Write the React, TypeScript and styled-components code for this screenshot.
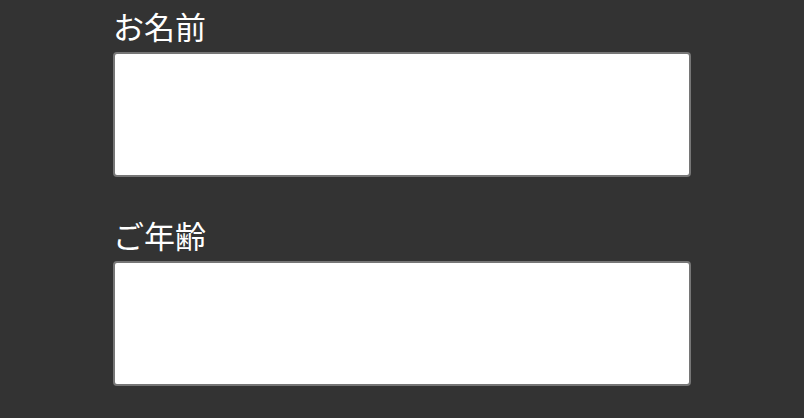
import React from "react";
import styled, { createGlobalStyle } from "styled-components";

const GlobalStyle = createGlobalStyle`
    html, body {
        margin: 0;
        padding: 0;
        background-color: #333333;
    }
    body {
        font-family: "Noto Sans CJK JP", "Noto Sans", sans-serif;
    }
`

const fields = [
    { id: "name", label: "お名前" },
    { id: "age", label: "ご年齢" },
]

export default function App() {
    return (
        <>
            <GlobalStyle />
            <StyledForm>
                {fields.map((item) => {
                    return (
                        <StyledField key={item.id}>
                            <StyledLabel htmlFor={item.id}>{item.label}</StyledLabel>
                            <StyledTextArea id={item.id} />
                        </StyledField>
                    )
                })}
            </StyledForm>
        </>
    )
}

const StyledForm = styled.form`
    display: flex;
    flex-direction: column;
    gap: 40px;
    width: 578px;
    margin: 0 auto;
    padding-top: 8px;
`

const StyledField = styled.div`
    display: flex;
    flex-direction: column;
`

const StyledLabel = styled.label`
    display: block;
    font-size: 31px;
    line-height: 36px;
    color: #ffffff;
    margin-bottom: 8px;
`

const StyledTextArea = styled.textarea`
    box-sizing: border-box;
    width: 100%;
    height: 125px;
    margin: 0;
    padding: 4px 8px;
    border: 2px solid #767676;
    border-radius: 4px;
    background-color: #ffffff;
    resize: none;
    outline: none;
    font-size: 16px;
    font-family: "Noto Sans CJK JP", sans-serif;
`
